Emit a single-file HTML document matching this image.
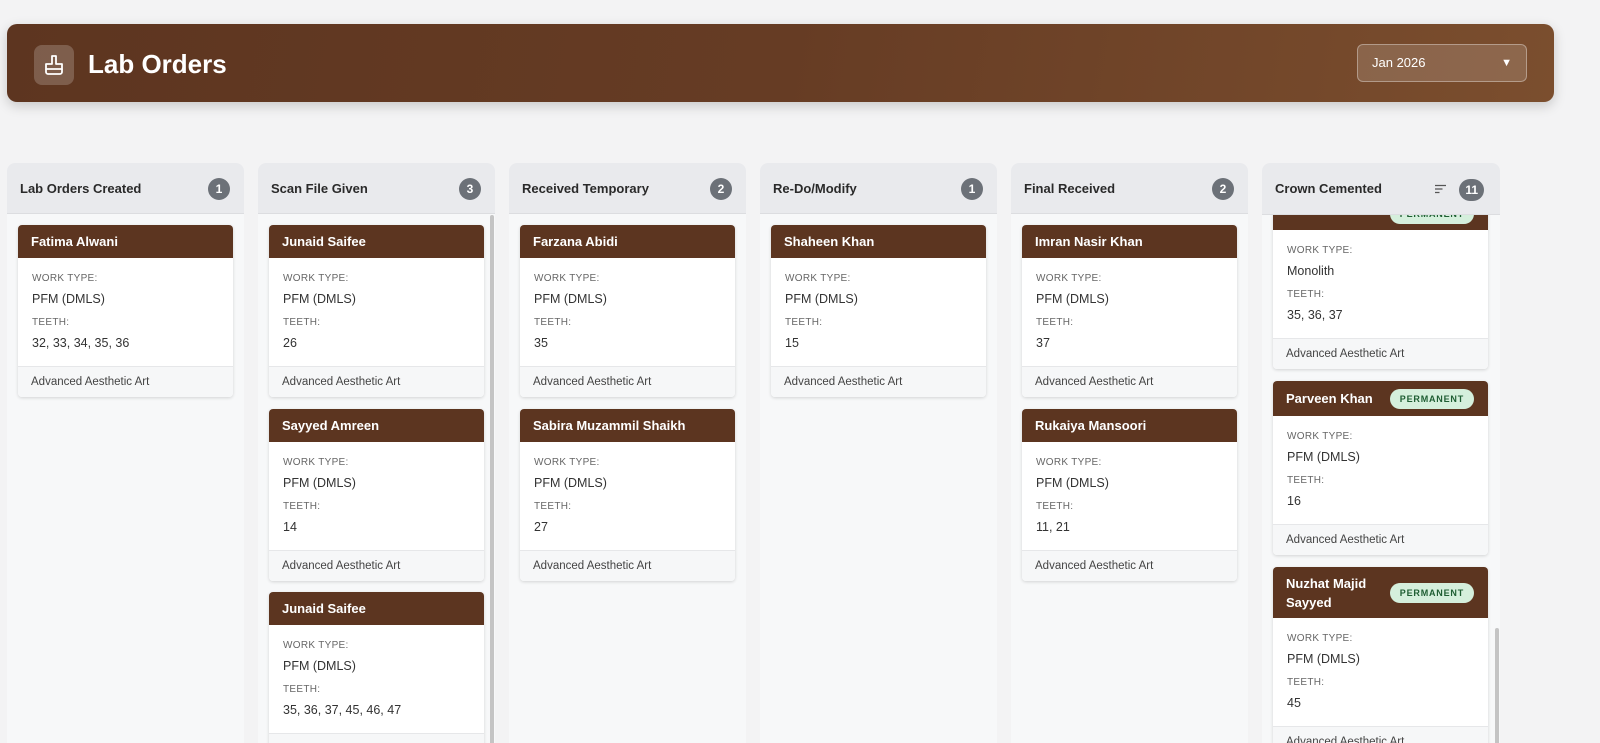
<!DOCTYPE html>
<html><head><meta charset="utf-8"><style>
*{box-sizing:border-box;margin:0;padding:0}
body{width:1600px;height:731px;overflow:hidden;background:#f3f3f4;font-family:"Liberation Sans",Helvetica,Arial,sans-serif;position:relative;color:#222}
.top{position:absolute;left:7px;top:24px;width:1547px;height:78px;border-radius:10px;background:linear-gradient(100deg,#5d3520 0%,#663c24 50%,#7b4e2e 100%);box-shadow:0 4px 12px rgba(0,0,0,.18)}
.logo{position:absolute;left:27px;top:21px;width:40px;height:40px;border-radius:8px;background:rgba(255,255,255,.2)}
.title{position:absolute;left:81px;top:22px;color:#fff;font-size:26px;font-weight:bold;line-height:36px}
.dd{position:absolute;left:1350px;top:20px;width:170px;height:38px;border:1px solid rgba(255,255,255,.35);border-radius:6px;background:rgba(255,255,255,.15);color:#fff;font-size:13px;line-height:36px;padding-left:14px}
.dd span{position:absolute;right:14px;top:0;font-size:11px}
.col{position:absolute;top:163px;width:237px;height:580px;background:#f7f8f9;border-radius:8px 8px 0 0;overflow:hidden}
.ch{position:absolute;left:0;top:0;width:100%;height:51px;background:#e9eaed;border-bottom:1px solid #dcdde0;font-size:13px;font-weight:bold;color:#2a2a2a;line-height:51px;padding-left:13px;z-index:2}
.cnt{position:absolute;right:14px;top:15px;min-width:22px;height:22px;border-radius:11px;background:#6c7178;color:#fff;font-size:12px;text-align:center;line-height:22px;padding:0 6px;font-weight:bold}
.card{position:absolute;left:11px;width:215px;background:#fff;border-radius:4px;box-shadow:0 1px 3px rgba(0,0,0,.15);overflow:hidden}
.hd{background:#5c3520;color:#fff;font-size:13px;font-weight:bold;height:33px;line-height:33px;padding-left:13px;position:relative}
.bd{padding:13px 14px 13px;height:108px}
.l{font-size:10px;color:#666;line-height:16px;margin-bottom:2px;letter-spacing:.3px}
.v{font-size:12.5px;color:#333;line-height:20px;margin-bottom:6px}
.ft{background:#f6f7f8;border-top:1px solid #e6e7e9;height:31px;line-height:31px;font-size:11.5px;color:#444;padding-left:13px}
.bdg{position:absolute;right:14px;background:#d5efdc;color:#1f5e33;font-size:9px;font-weight:bold;letter-spacing:.8px;border-radius:10px;height:20px;line-height:20px;padding:0 10px}
.sb{position:absolute;width:4px;background:#c4c4c4;border-radius:2px}
</style></head><body>
<div class="top">
 <div class="logo"><svg width="40" height="40" viewBox="0 0 40 40" fill="none" stroke="#fff" stroke-width="1.8" stroke-linejoin="round"><path d="M18 11h4v8h6v5H12v-5h6z"/><path d="M12 24v3a2 2 0 0 0 2 2h12a2 2 0 0 0 2-2v-3"/></svg></div>
 <div class="title">Lab Orders</div>
 <div class="dd">Jan 2026<span>▼</span></div>
</div>

<div class="col" style="left:7px"><div class="ch">Lab Orders Created<div class="cnt">1</div></div>
 <div class="card" style="top:62px"><div class="hd">Fatima Alwani</div><div class="bd"><div class="l">WORK TYPE:</div><div class="v">PFM (DMLS)</div><div class="l">TEETH:</div><div class="v">32, 33, 34, 35, 36</div></div><div class="ft">Advanced Aesthetic Art</div></div>
</div>

<div class="col" style="left:258px"><div class="ch">Scan File Given<div class="cnt">3</div></div>
 <div class="card" style="top:62px"><div class="hd">Junaid Saifee</div><div class="bd"><div class="l">WORK TYPE:</div><div class="v">PFM (DMLS)</div><div class="l">TEETH:</div><div class="v">26</div></div><div class="ft">Advanced Aesthetic Art</div></div>
 <div class="card" style="top:246px"><div class="hd">Sayyed Amreen</div><div class="bd"><div class="l">WORK TYPE:</div><div class="v">PFM (DMLS)</div><div class="l">TEETH:</div><div class="v">14</div></div><div class="ft">Advanced Aesthetic Art</div></div>
 <div class="card" style="top:429px"><div class="hd">Junaid Saifee</div><div class="bd"><div class="l">WORK TYPE:</div><div class="v">PFM (DMLS)</div><div class="l">TEETH:</div><div class="v">35, 36, 37, 45, 46, 47</div></div><div class="ft">Advanced Aesthetic Art</div></div>
 <div class="sb" style="left:232px;top:52px;height:530px"></div>
</div>

<div class="col" style="left:509px"><div class="ch">Received Temporary<div class="cnt">2</div></div>
 <div class="card" style="top:62px"><div class="hd">Farzana Abidi</div><div class="bd"><div class="l">WORK TYPE:</div><div class="v">PFM (DMLS)</div><div class="l">TEETH:</div><div class="v">35</div></div><div class="ft">Advanced Aesthetic Art</div></div>
 <div class="card" style="top:246px"><div class="hd">Sabira Muzammil Shaikh</div><div class="bd"><div class="l">WORK TYPE:</div><div class="v">PFM (DMLS)</div><div class="l">TEETH:</div><div class="v">27</div></div><div class="ft">Advanced Aesthetic Art</div></div>
</div>

<div class="col" style="left:760px"><div class="ch">Re-Do/Modify<div class="cnt">1</div></div>
 <div class="card" style="top:62px"><div class="hd">Shaheen Khan</div><div class="bd"><div class="l">WORK TYPE:</div><div class="v">PFM (DMLS)</div><div class="l">TEETH:</div><div class="v">15</div></div><div class="ft">Advanced Aesthetic Art</div></div>
</div>

<div class="col" style="left:1011px"><div class="ch">Final Received<div class="cnt">2</div></div>
 <div class="card" style="top:62px"><div class="hd">Imran Nasir Khan</div><div class="bd"><div class="l">WORK TYPE:</div><div class="v">PFM (DMLS)</div><div class="l">TEETH:</div><div class="v">37</div></div><div class="ft">Advanced Aesthetic Art</div></div>
 <div class="card" style="top:246px"><div class="hd">Rukaiya Mansoori</div><div class="bd"><div class="l">WORK TYPE:</div><div class="v">PFM (DMLS)</div><div class="l">TEETH:</div><div class="v">11, 21</div></div><div class="ft">Advanced Aesthetic Art</div></div>
</div>

<div class="col" style="left:1262px;width:238px"><div class="ch" style="line-height:52px;height:52px">Crown Cemented<svg style="position:absolute;left:172px;top:21px" width="13" height="10" viewBox="0 0 13 10" stroke="#555" stroke-width="1.3"><path d="M1 1.5h11M1 5h7.5M1 8.5h4.5"/></svg><div class="cnt" style="top:16px;right:16px">11</div></div>
 <div class="card" style="top:34px"><div class="hd" style="height:33px"><div class="bdg" style="top:7px">PERMANENT</div></div><div class="bd"><div class="l">WORK TYPE:</div><div class="v">Monolith</div><div class="l">TEETH:</div><div class="v">35, 36, 37</div></div><div class="ft">Advanced Aesthetic Art</div></div>
 <div class="card" style="top:218px"><div class="hd" style="height:35px;line-height:35px">Parveen Khan<div class="bdg" style="top:8px">PERMANENT</div></div><div class="bd"><div class="l">WORK TYPE:</div><div class="v">PFM (DMLS)</div><div class="l">TEETH:</div><div class="v">16</div></div><div class="ft">Advanced Aesthetic Art</div></div>
 <div class="card" style="top:404px"><div class="hd" style="height:51px;line-height:19px;padding-top:7px">Nuzhat Majid<br>Sayyed<div class="bdg" style="top:16px">PERMANENT</div></div><div class="bd"><div class="l">WORK TYPE:</div><div class="v">PFM (DMLS)</div><div class="l">TEETH:</div><div class="v">45</div></div><div class="ft">Advanced Aesthetic Art</div></div>
 <div class="sb" style="left:233px;top:465px;height:120px"></div>
</div>
</body></html>
